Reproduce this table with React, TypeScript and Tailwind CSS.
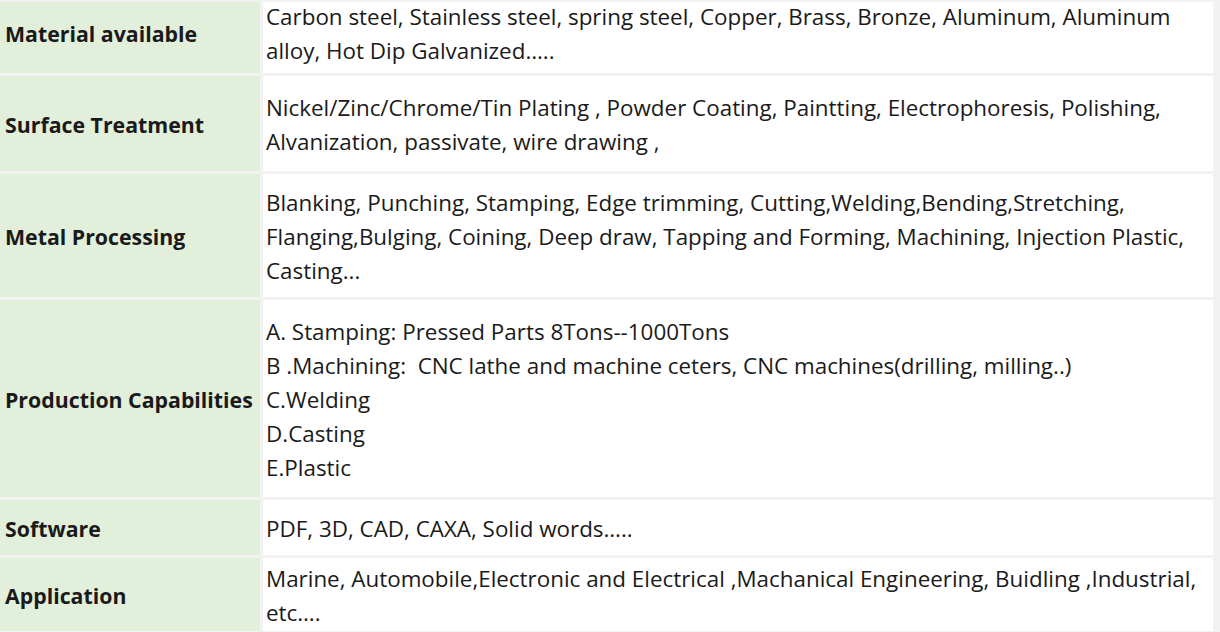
import React from 'react'

interface SpecRow {
    label: string
    lines: string[]
    height: string
    pad: string
}

const rows: SpecRow[] = [
    {
        label: 'Material available',
        lines: [
            'Carbon steel, Stainless steel, spring steel, Copper, Brass, Bronze, Aluminum, Aluminum',
            'alloy, Hot Dip Galvanized…..',
        ],
        height: 'h-[71px]',
        pad: 'pb-[8px]',
    },
    {
        label: 'Surface Treatment',
        lines: [
            'Nickel/Zinc/Chrome/Tin Plating , Powder Coating, Paintting, Electrophoresis, Polishing,',
            'Alvanization, passivate, wire drawing ,',
        ],
        height: 'h-[95px]',
        pad: 'pt-[3px]',
    },
    {
        label: 'Metal Processing',
        lines: [
            'Blanking, Punching, Stamping, Edge trimming, Cutting,Welding,Bending,Stretching,',
            'Flanging,Bulging, Coining, Deep draw, Tapping and Forming, Machining, Injection Plastic,',
            'Casting...',
        ],
        height: 'h-[123px]',
        pad: 'pt-[2px]',
    },
    {
        label: 'Production Capabilities',
        lines: [
            'A. Stamping: Pressed Parts 8Tons--1000Tons',
            'B .Machining:  CNC lathe and machine ceters, CNC machines(drilling, milling..)',
            'C.Welding',
            'D.Casting',
            'E.Plastic',
        ],
        height: 'h-[197px]',
        pad: 'pt-[2px]',
    },
    {
        label: 'Software',
        lines: ['PDF, 3D, CAD, CAXA, Solid words…..'],
        height: 'h-[55px]',
        pad: 'pt-[2px]',
    },
    {
        label: 'Application',
        lines: [
            'Marine, Automobile,Electronic and Electrical ,Machanical Engineering, Buidling ,Industrial,',
            'etc….',
        ],
        height: 'h-[73px]',
        pad: 'pt-[3px]',
    },
]

export default function App() {
    return (
        <div className="w-[1220px] h-[632px] bg-[#f2f2f2] pt-[2px] font-['Open_Sans',sans-serif] text-[#1a1a1a] overflow-hidden">
            <div className="flex flex-col gap-[3px] w-[1213px]">
                {rows.map((row) => (
                    <div key={row.label} className={`flex gap-[3px] ${row.height}`}>
                        {/* label cell */}
                        <div className={`w-[260px] shrink-0 bg-[#e2efda] flex items-center pl-[5px] text-[21.3px] font-bold leading-[34px] ${row.pad}`}>
                            {row.label}
                        </div>
                        {/* value cell */}
                        <div className={`flex-1 bg-white flex flex-col justify-center pl-[3px] text-[22.4px] leading-[34px] whitespace-pre ${row.pad}`}>
                            {row.lines.map((line, i) => (
                                <p key={i}>{line}</p>
                            ))}
                        </div>
                    </div>
                ))}
            </div>
        </div>
    )
}
